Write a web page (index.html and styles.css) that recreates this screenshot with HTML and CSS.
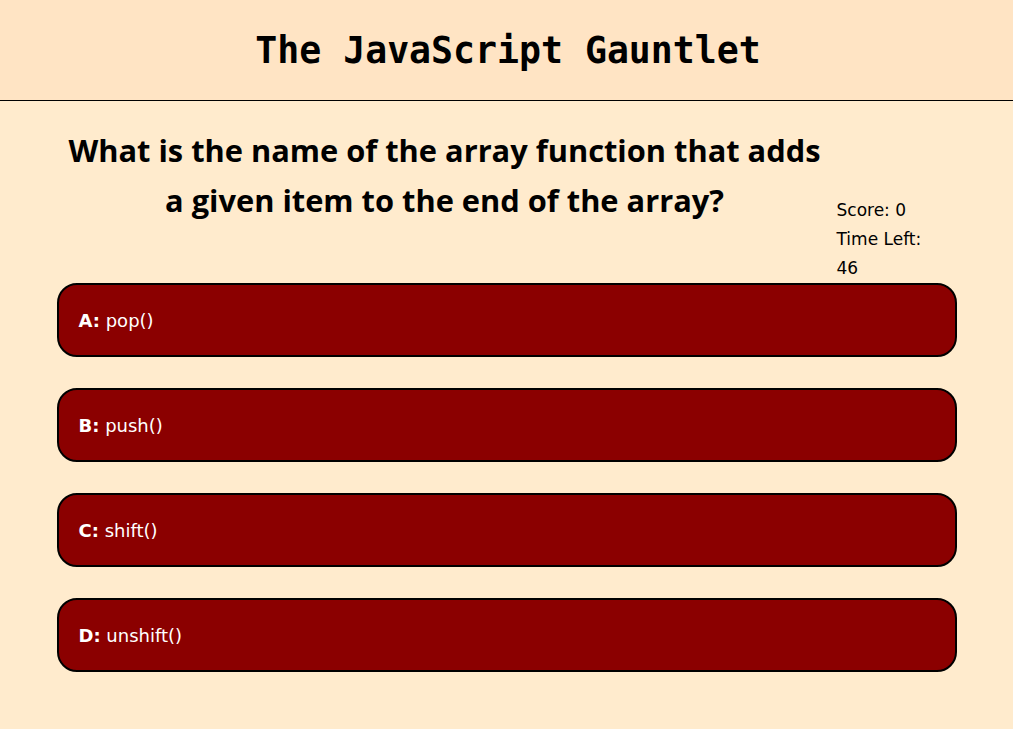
FILE: index.html
```html
<!DOCTYPE html>
<html>
<head>
<meta charset="utf-8">
<title>The JavaScript Gauntlet</title>
<link rel="stylesheet" href="styles.css">
</head>
<body>
<header class="top">
  <h1 class="title">The JavaScript Gauntlet</h1>
</header>
<main class="quiz">
  <div class="quiz-head">
    <h2 class="question">What is the name of the array function that adds a given item to the end of the array?</h2>
    <div class="status">
      <p>Score: 0</p>
      <p>Time Left: 46</p>
    </div>
  </div>
  <div class="answers">
    <button class="answer"><b>A:</b> pop()</button>
    <button class="answer"><b>B:</b> push()</button>
    <button class="answer"><b>C:</b> shift()</button>
    <button class="answer"><b>D:</b> unshift()</button>
  </div>
</main>
</body>
</html>
```
FILE: styles.css
```css
* { box-sizing: border-box; }
html, body { margin: 0; padding: 0; }
body {
  background: #ffebcd;
  font-family: "DejaVu Sans", "Liberation Sans", sans-serif;
  color: #000;
  min-height: 729px;
}
.top {
  background: #ffe4c4;
  height: 101px;
  border-bottom: 1px solid #000;
  display: flex;
  align-items: center;
  justify-content: center;
  padding-left: 3px;
}
.title {
  margin: 0;
  font-family: "DejaVu Sans Mono", "Liberation Mono", monospace;
  font-size: 36.5px;
  font-weight: bold;
}
.quiz {
  width: 900px;
  margin: 0 auto;
}
.quiz-head {
  display: flex;
  align-items: flex-start;
}
.question {
  flex: 1;
  margin: 24px 0 0;
  padding: 0 12px 0 8px;
  text-align: center;
  font-family: "Open Sans", "DejaVu Sans", sans-serif;
  font-size: 30.8px;
  line-height: 50px;
  font-weight: 700;
}
.status {
  width: 100px;
  margin: 95px 20px 0 0;
  font-size: 17px;
  line-height: 29px;
}
.status p { margin: 0; }
.answers {
  display: flex;
  flex-direction: column;
  gap: 31px;
}
.answer {
  display: block;
  width: 100%;
  height: 74px;
  background: #8b0000;
  color: #fff;
  border: 2px solid #000;
  border-radius: 20px;
  text-align: left;
  padding: 0 20px;
  font-family: "DejaVu Sans", "Liberation Sans", sans-serif;
  font-size: 18px;
}
```
